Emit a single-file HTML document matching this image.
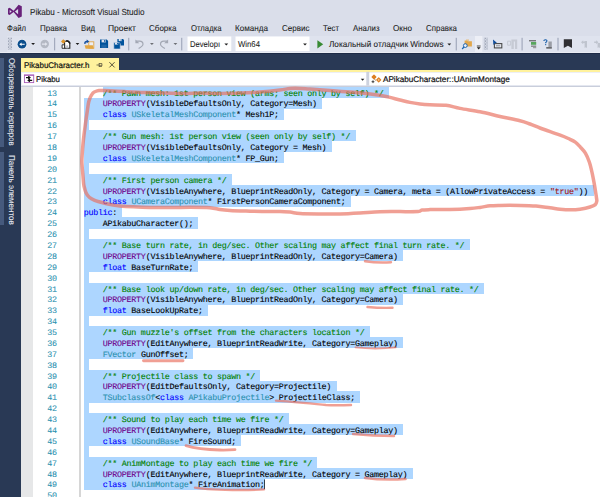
<!DOCTYPE html>
<html>
<head>
<meta charset="utf-8">
<title>Pikabu - Microsoft Visual Studio</title>
<style>
html,body{margin:0;padding:0;}
body{text-rendering:geometricPrecision;width:600px;height:497px;overflow:hidden;position:relative;background:#293955;font-family:"Liberation Sans",sans-serif;}
.abs{position:absolute;}
#title{left:0;top:0;width:600px;height:21px;background:#DADEEA;}
#menu{left:0;top:21px;width:600px;height:15px;background:#DADEEA;}
#tool{left:0;top:35px;width:600px;height:18.2px;background:#DADEEA;border-bottom:1.3px solid #E9ECF3;box-sizing:border-box;}
#tray{left:6.5px;top:35.7px;width:593.5px;height:16.2px;background:#DFE3EE;}
.ui{-webkit-text-stroke:0.08px;position:absolute;font-size:8.7px;line-height:10px;color:#1b1b1b;white-space:nowrap;}
#side{left:0;top:53.2px;width:21px;height:443px;background:#293955;}
.strip{position:absolute;left:0;width:4px;background:#465A7D;}
#tabrow{left:21px;top:53.2px;width:579px;height:17.1px;background:#293955;border-top:1px solid #1E2B47;box-sizing:border-box;}
#tab{left:21px;top:57.7px;width:98px;height:13.3px;background:#FFF29D;}
#tabline{left:21px;top:70.3px;width:579px;height:1.5px;background:#FFF29D;}
#nav{left:21px;top:71.8px;width:579px;height:13.9px;background:#FFFFFF;border-top:1px solid #EDEFF6;border-bottom:1.2px solid #E4E7F0;border-left:1px solid #EDEFF6;box-sizing:border-box;}
#navb{left:21px;top:85.6px;width:579px;height:1.2px;background:#C9CEDB;}
#code{left:21px;top:86.5px;width:579px;height:410.5px;background:#FFFFFF;}
#margin{left:21px;top:86.5px;width:11.5px;height:410.5px;background:#E6E7E8;}
#vline{left:78.9px;top:86.5px;width:1.7px;height:410.5px;background:#D6D6D6;}
.sel{position:absolute;background:#ADD6FF;}
.ln{-webkit-text-stroke:0.08px;position:absolute;left:29.3px;width:27.5px;text-align:right;color:#2B91AF;font-family:"Liberation Mono",monospace;font-size:8.4px;letter-spacing:-0.270px;line-height:10.885px;height:10.885px;white-space:pre;}
.cl{-webkit-text-stroke:0.1px;position:absolute;left:83.8px;color:#000;font-family:"Liberation Mono",monospace;font-size:8.4px;letter-spacing:-0.270px;line-height:10.885px;height:10.885px;white-space:pre;}
</style>
</head>
<body>
<div id="title" class="abs"></div>
<div id="menu" class="abs"></div>
<div id="tool" class="abs"></div>
<div id="tray" class="abs"></div>
<div class="ui" style="left:30.00px;top:7.04px;font-size:8.8px;line-height:normal;color:#1e1e1e;transform-origin:0 0;transform:scaleX(0.9228);">Pikabu - Microsoft Visual Studio</div>
<div class="ui" style="left:7.00px;top:22.71px;font-size:8.5px;line-height:normal;color:#1e1e1e;transform-origin:0 0;transform:scaleX(0.9092);">Файл</div>
<div class="ui" style="left:40.00px;top:22.71px;font-size:8.5px;line-height:normal;color:#1e1e1e;transform-origin:0 0;transform:scaleX(0.9403);">Правка</div>
<div class="ui" style="left:81.00px;top:22.71px;font-size:8.5px;line-height:normal;color:#1e1e1e;transform-origin:0 0;transform:scaleX(0.9104);">Вид</div>
<div class="ui" style="left:108.00px;top:22.71px;font-size:8.5px;line-height:normal;color:#1e1e1e;transform-origin:0 0;transform:scaleX(1.0000);">Проект</div>
<div class="ui" style="left:148.50px;top:22.71px;font-size:8.5px;line-height:normal;color:#1e1e1e;transform-origin:0 0;transform:scaleX(0.9452);">Сборка</div>
<div class="ui" style="left:190.50px;top:22.71px;font-size:8.5px;line-height:normal;color:#1e1e1e;transform-origin:0 0;transform:scaleX(0.9078);">Отладка</div>
<div class="ui" style="left:235.00px;top:22.71px;font-size:8.5px;line-height:normal;color:#1e1e1e;transform-origin:0 0;transform:scaleX(0.9529);">Команда</div>
<div class="ui" style="left:281.50px;top:22.71px;font-size:8.5px;line-height:normal;color:#1e1e1e;transform-origin:0 0;transform:scaleX(0.9448);">Сервис</div>
<div class="ui" style="left:322.50px;top:22.71px;font-size:8.5px;line-height:normal;color:#1e1e1e;transform-origin:0 0;transform:scaleX(0.9098);">Тест</div>
<div class="ui" style="left:352.50px;top:22.71px;font-size:8.5px;line-height:normal;color:#1e1e1e;transform-origin:0 0;transform:scaleX(0.9234);">Анализ</div>
<div class="ui" style="left:393.00px;top:22.71px;font-size:8.5px;line-height:normal;color:#1e1e1e;transform-origin:0 0;transform:scaleX(0.9619);">Окно</div>
<div class="ui" style="left:426.00px;top:22.71px;font-size:8.5px;line-height:normal;color:#1e1e1e;transform-origin:0 0;transform:scaleX(0.9297);">Справка</div>
<svg class="abs" style="left:0;top:34px" width="600" height="22" viewBox="0 34 600 22">
<defs>
<pattern id="grip" x="7.8" y="37.6" width="3" height="3" patternUnits="userSpaceOnUse">
<rect x="0" y="0" width="1.1" height="1.1" fill="#6f788e"/><rect x="1.5" y="1.5" width="1.1" height="1.1" fill="#6f788e"/>
</pattern>
</defs>
<!-- highlighted overflow button -->
<rect x="475" y="36" width="7.3" height="16" fill="#EDEFF6"/>
<!-- combos -->
<rect x="187.5" y="36.5" width="43.8" height="14.6" fill="#fff"/>
<rect x="235.5" y="36.5" width="74" height="14.6" fill="#fff"/>
<!-- grips -->
<rect x="7.8" y="37.6" width="4.2" height="12.2" fill="url(#grip)"/>
<rect x="483.8" y="37.6" width="4.2" height="12.2" fill="url(#grip)"/>
<!-- separators -->
<g fill="#a3aabd">
<rect x="54" y="37.8" width="1.2" height="12.6"/>
<rect x="128.1" y="37.8" width="1.2" height="12.6"/>
<rect x="181.1" y="37.8" width="1.2" height="12.6"/>
<rect x="455.7" y="37.8" width="1.2" height="12.6"/>
<rect x="521.5" y="37.8" width="1.2" height="12.6"/>
<rect x="557.4" y="37.8" width="1.2" height="12.6"/>
</g>
<!-- back -->
<circle cx="22" cy="44.2" r="5.1" fill="#EEF0F6"/><circle cx="22" cy="44.2" r="4.4" fill="#0A4D8C"/>
<path d="M19.3 44.2 L21.6 42.4 L21.6 43.65 L24.7 43.65 L24.7 44.75 L21.6 44.75 L21.6 46 Z" fill="#fff"/>
<!-- forward (disabled) -->
<circle cx="44.75" cy="44" r="4.2" fill="#B4B9C4"/>
<path d="M47.4 44.1 L45.1 42.3 L45.1 43.55 L42 43.55 L42 44.65 L45.1 44.65 L45.1 45.9 Z" fill="#E3E6EF"/>
<!-- dropdown arrows -->
<g fill="#1e1e1e">
<path d="M31.2 43 h3.8 l-1.9 2.1z"/>
<path d="M75.6 43 h3.8 l-1.9 2.1z"/>
<path d="M224.4 43.5 h3.8 l-1.9 2.1z"/>
<path d="M303.1 43.5 h3.8 l-1.9 2.1z"/>
<path d="M447.4 43.5 h3.8 l-1.9 2.1z"/>
<path d="M476.8 47.3 h3.8 l-1.9 2.2z"/>
<rect x="476.8" y="45.6" width="3.8" height="0.8"/>
</g>
<g fill="#6d6f75">
<path d="M150 43 h3.8 l-1.9 2.1z"/>
<path d="M173.5 43 h3.8 l-1.9 2.1z"/>
</g>
<!-- new project -->
<path d="M64.6 41.2 h3.4 l1.8 1.8 v5.3 h-5.2z" fill="#fff" stroke="#222" stroke-width="1.1"/>
<path d="M66.2 40.7 q3 -.1 3.7 3" fill="none" stroke="#1a1a1a" stroke-width="1.5"/>
<path d="M62.1 44.8 h2.5 v3.5 h-2.5z" fill="#fff" stroke="#222" stroke-width="0.9"/>
<rect x="66.2" y="45.4" width="2" height="2.9" fill="#b9bcc6"/>
<path d="M63.3 39.3 L65.6 41.5 L63.3 43.7 L61 41.5 Z" fill="#DF962A"/>
<!-- open folder -->
<rect x="88.8" y="41.8" width="5" height="6.4" fill="#ECEEF5" stroke="#E0A649" stroke-width="0.9"/>
<path d="M84.6 45.2 h8.2 l1 3.5 h-8.2z" fill="#E3A642"/>
<path d="M85 43.8 q-.4 -2.5 2.2 -2.4" stroke="#144F9E" stroke-width="1.5" fill="none"/><path d="M86.7 39.5 l2.6 1.9 -2.6 1.9z" fill="#144F9E"/>
<!-- save -->
<path d="M100 39.6 h6.8 l1.3 1.3 v7.1 h-8.1z" fill="#00539C"/>
<rect x="101.6" y="39.6" width="4.2" height="2.8" fill="#DFE3EE"/>
<rect x="104.2" y="40" width="1.1" height="1.9" fill="#00539C"/>
<rect x="101.4" y="44.6" width="5.2" height="3.4" fill="#1f66a8"/>
<!-- save all -->
<path d="M117.4 39 h5.6 l1 1 v5.6 h-6.6z" fill="#00539C"/>
<rect x="118.7" y="39" width="3.3" height="2.1" fill="#DFE3EE"/>
<rect x="120.7" y="39.3" width="0.9" height="1.5" fill="#00539C"/>
<path d="M113.8 42.6 h5.4 l1.1 1 v5.4 h-6.5z" fill="#00539C" stroke="#DDE1EC" stroke-width="0.6"/>
<rect x="115" y="42.6" width="3.2" height="2" fill="#DFE3EE"/>
<rect x="117" y="42.9" width="0.9" height="1.4" fill="#00539C"/>
<!-- undo / redo (disabled) -->
<path d="M136 41.2 h3.6 q3.4 .2 3.4 3 q-.2 2 -4.4 4.4" stroke="#A3A8B4" stroke-width="1.2" fill="none"/>
<path d="M135.4 39.4 v3.9 h3.9z" fill="#A3A8B4"/>
<path d="M167.5 41.2 h-3.6 q-3.4 .2 -3.4 3 q.2 2 4.4 4.4" stroke="#A3A8B4" stroke-width="1.2" fill="none"/>
<path d="M168.1 39.4 v3.9 h-3.9z" fill="#A3A8B4"/>
<!-- play -->
<path d="M317.4 40.2 v8.2 l5.8 -4.1z" fill="#388A34"/>
<!-- find in files -->
<path d="M464.6 40.4 h2.6 l.7 .8 h4 v5.4 h-7.3z" fill="#E2A74C"/>
<path d="M466 39.6 h3 v1 h-3z" fill="#E8B766"/>
<circle cx="465.3" cy="45.6" r="1.9" fill="#EDF0F7" stroke="#1B66B3" stroke-width="1"/>
<path d="M464 47 l-1.9 2" stroke="#1B66B3" stroke-width="1.2"/>
<!-- cursor + textbox -->
<rect x="494.4" y="43.6" width="7.4" height="4.3" fill="#E9ECF3" stroke="#4a4a4a" stroke-width="1.1"/><rect x="496" y="45.3" width="4.2" height="1" fill="#8d9099"/>
<path d="M493 39.4 l3.9 3.4 -2 .4 -1.5 1.7z" fill="#0E4C9C"/>
<!-- gray disabled icon -->
<path d="M507.6 41.2 h3 v4 h-3z" fill="none" stroke="#C3C7D1" stroke-width="0.9"/><path d="M511.4 39.4 h5.8 v9.6 h-2.2 v-7.6 h-1.2 v7.6 h-2.4z" fill="#C6CAD4"/>
<!-- list icon (green) -->
<rect x="529" y="40.3" width="7" height="1" fill="#4a4a4a"/>
<rect x="531" y="42" width="5.2" height="2.8" fill="#58A55C"/>
<rect x="531" y="45.6" width="5.2" height="1.1" fill="#6d6d6d"/>
<rect x="533" y="47.2" width="3.2" height="1" fill="#8a8a8a"/>
<!-- ? icon -->
<path d="M543.8 41 q.2 -1.3 1.7 -1.2 q1.5 .1 1.4 1.3 q0 .8 -1.2 1.4 v.7" stroke="#1B5FAA" stroke-width="1.1" fill="none"/>
<rect x="545.1" y="44.1" width="1.1" height="1.1" fill="#1B5FAA"/>
<path d="M548.4 41.4 h3.4 v7 h-5.6 v-1.4 h2.2z" fill="#9a9da5"/>
<rect x="546.4" y="47.4" width="5.4" height="1" fill="#4a4a4a"/>
<!-- bookmark -->
<path d="M563.8 39.3 h8.2 v8.8 l-4.1 -2.4 -4.1 2.4z" fill="#2f2f33"/>
<!-- gray bookmark nav icons -->
<path d="M581 42.2 l2.2 -2 v1.3 h2 v1.4 h-2 v1.3z" fill="#BFC4CE"/>
<path d="M584.6 41 h2.4 v7 l-1.2 -.8 -1.2 .8z" fill="#BFC4CE"/>
<path d="M598.4 42.2 l-2.2 -2 v1.3 h-2 v1.4 h2 v1.3z" fill="#BFC4CE"/>
<path d="M597.6 43 h2.4 v5 l-1.2 -.8 -1.2 .8z" fill="#BFC4CE"/>
</svg>
<div class="ui" style="left:190.00px;top:39.31px;font-size:8.5px;line-height:normal;color:#1e1e1e;transform-origin:0 0;transform:scaleX(0.8942);">Developı</div><div class="ui" style="left:238.30px;top:39.31px;font-size:8.5px;line-height:normal;color:#1e1e1e;transform-origin:0 0;transform:scaleX(0.9131);">Win64</div><div class="ui" style="left:328.80px;top:39.11px;font-size:8.5px;line-height:normal;color:#1e1e1e;transform-origin:0 0;transform:scaleX(0.9632);">Локальный отладчик Windows</div>
<div id="side" class="abs"></div>
<div id="tabrow" class="abs"></div>
<div id="tab" class="abs"></div>
<div id="tabline" class="abs"></div>
<div id="nav" class="abs"></div>
<div id="navb" class="abs"></div>
<div id="code" class="abs"></div>
<div id="margin" class="abs"></div>
<div id="vline" class="abs"></div>
<div class="sel" style="left:102.88px;top:86.70px;width:286.13px;height:11.19px"></div>
<div class="sel" style="left:83.80px;top:97.59px;width:238.43px;height:11.19px"></div>
<div class="sel" style="left:83.80px;top:108.47px;width:200.27px;height:11.19px"></div>
<div class="sel" style="left:83.80px;top:119.36px;width:5.00px;height:11.19px"></div>
<div class="sel" style="left:83.80px;top:130.24px;width:271.82px;height:11.19px"></div>
<div class="sel" style="left:83.80px;top:141.12px;width:247.97px;height:11.19px"></div>
<div class="sel" style="left:83.80px;top:152.01px;width:200.27px;height:11.19px"></div>
<div class="sel" style="left:83.80px;top:162.89px;width:5.00px;height:11.19px"></div>
<div class="sel" style="left:83.80px;top:173.78px;width:147.80px;height:11.19px"></div>
<div class="sel" style="left:83.80px;top:184.67px;width:510.32px;height:11.19px"></div>
<div class="sel" style="left:83.80px;top:195.55px;width:267.05px;height:11.19px"></div>
<div class="sel" style="left:83.80px;top:206.44px;width:38.09px;height:11.19px"></div>
<div class="sel" style="left:83.80px;top:217.32px;width:114.41px;height:11.19px"></div>
<div class="sel" style="left:83.80px;top:228.20px;width:5.00px;height:11.19px"></div>
<div class="sel" style="left:83.80px;top:239.09px;width:386.30px;height:11.19px"></div>
<div class="sel" style="left:83.80px;top:249.98px;width:319.52px;height:11.19px"></div>
<div class="sel" style="left:83.80px;top:260.86px;width:114.41px;height:11.19px"></div>
<div class="sel" style="left:83.80px;top:271.75px;width:5.00px;height:11.19px"></div>
<div class="sel" style="left:83.80px;top:282.63px;width:400.61px;height:11.19px"></div>
<div class="sel" style="left:83.80px;top:293.51px;width:319.52px;height:11.19px"></div>
<div class="sel" style="left:83.80px;top:304.40px;width:123.95px;height:11.19px"></div>
<div class="sel" style="left:83.80px;top:315.29px;width:5.00px;height:11.19px"></div>
<div class="sel" style="left:83.80px;top:326.17px;width:286.13px;height:11.19px"></div>
<div class="sel" style="left:83.80px;top:337.06px;width:319.52px;height:11.19px"></div>
<div class="sel" style="left:83.80px;top:347.94px;width:109.64px;height:11.19px"></div>
<div class="sel" style="left:83.80px;top:358.82px;width:5.00px;height:11.19px"></div>
<div class="sel" style="left:83.80px;top:369.71px;width:176.42px;height:11.19px"></div>
<div class="sel" style="left:83.80px;top:380.59px;width:252.74px;height:11.19px"></div>
<div class="sel" style="left:83.80px;top:391.48px;width:276.59px;height:11.19px"></div>
<div class="sel" style="left:83.80px;top:402.37px;width:5.00px;height:11.19px"></div>
<div class="sel" style="left:83.80px;top:413.25px;width:205.04px;height:11.19px"></div>
<div class="sel" style="left:83.80px;top:424.13px;width:319.52px;height:11.19px"></div>
<div class="sel" style="left:83.80px;top:435.02px;width:157.34px;height:11.19px"></div>
<div class="sel" style="left:83.80px;top:445.90px;width:5.00px;height:11.19px"></div>
<div class="sel" style="left:83.80px;top:456.79px;width:233.66px;height:11.19px"></div>
<div class="sel" style="left:83.80px;top:467.67px;width:329.06px;height:11.19px"></div>
<div class="sel" style="left:83.80px;top:478.56px;width:181.26px;height:11.19px"></div>
<div class="ln" style="top:88.60px">13</div>
<div class="ln" style="top:99.49px">14</div>
<div class="ln" style="top:110.37px">15</div>
<div class="ln" style="top:121.26px">16</div>
<div class="ln" style="top:132.14px">17</div>
<div class="ln" style="top:143.03px">18</div>
<div class="ln" style="top:153.91px">19</div>
<div class="ln" style="top:164.79px">20</div>
<div class="ln" style="top:175.68px">21</div>
<div class="ln" style="top:186.57px">22</div>
<div class="ln" style="top:197.45px">23</div>
<div class="ln" style="top:208.34px">24</div>
<div class="ln" style="top:219.22px">25</div>
<div class="ln" style="top:230.10px">26</div>
<div class="ln" style="top:240.99px">27</div>
<div class="ln" style="top:251.88px">28</div>
<div class="ln" style="top:262.76px">29</div>
<div class="ln" style="top:273.64px">30</div>
<div class="ln" style="top:284.53px">31</div>
<div class="ln" style="top:295.41px">32</div>
<div class="ln" style="top:306.30px">33</div>
<div class="ln" style="top:317.19px">34</div>
<div class="ln" style="top:328.07px">35</div>
<div class="ln" style="top:338.95px">36</div>
<div class="ln" style="top:349.84px">37</div>
<div class="ln" style="top:360.72px">38</div>
<div class="ln" style="top:371.61px">39</div>
<div class="ln" style="top:382.49px">40</div>
<div class="ln" style="top:393.38px">41</div>
<div class="ln" style="top:404.26px">42</div>
<div class="ln" style="top:415.15px">43</div>
<div class="ln" style="top:426.03px">44</div>
<div class="ln" style="top:436.92px">45</div>
<div class="ln" style="top:447.80px">46</div>
<div class="ln" style="top:458.69px">47</div>
<div class="ln" style="top:469.57px">48</div>
<div class="ln" style="top:480.46px">49</div>
<div class="ln" style="top:491.34px">50</div>
<div class="cl" style="top:88.60px">    <span style="color:#008000">/** Pawn mesh: 1st person view (arms; seen only by self) */</span></div>
<div class="cl" style="top:99.49px">    <span style="color:#6F008A">UPROPERTY</span>(VisibleDefaultsOnly, Category=Mesh)</div>
<div class="cl" style="top:110.37px">    <span style="color:#0000FF">class</span> <span style="color:#2B91AF">USkeletalMeshComponent</span>* Mesh1P;</div>
<div class="cl" style="top:132.14px">    <span style="color:#008000">/** Gun mesh: 1st person view (seen only by self) */</span></div>
<div class="cl" style="top:143.03px">    <span style="color:#6F008A">UPROPERTY</span>(VisibleDefaultsOnly, Category = Mesh)</div>
<div class="cl" style="top:153.91px">    <span style="color:#0000FF">class</span> <span style="color:#2B91AF">USkeletalMeshComponent</span>* FP_Gun;</div>
<div class="cl" style="top:175.68px">    <span style="color:#008000">/** First person camera */</span></div>
<div class="cl" style="top:186.57px">    <span style="color:#6F008A">UPROPERTY</span>(VisibleAnywhere, BlueprintReadOnly, Category = Camera, meta = (AllowPrivateAccess = <span style="color:#A31515">&quot;true&quot;</span>))</div>
<div class="cl" style="top:197.45px">    <span style="color:#0000FF">class</span> <span style="color:#2B91AF">UCameraComponent</span>* FirstPersonCameraComponent;</div>
<div class="cl" style="top:208.34px"><span style="color:#0000FF">public</span>:</div>
<div class="cl" style="top:219.22px">    APikabuCharacter();</div>
<div class="cl" style="top:240.99px">    <span style="color:#008000">/** Base turn rate, in deg/sec. Other scaling may affect final turn rate. */</span></div>
<div class="cl" style="top:251.88px">    <span style="color:#6F008A">UPROPERTY</span>(VisibleAnywhere, BlueprintReadOnly, Category=Camera)</div>
<div class="cl" style="top:262.76px">    <span style="color:#0000FF">float</span> BaseTurnRate;</div>
<div class="cl" style="top:284.53px">    <span style="color:#008000">/** Base look up/down rate, in deg/sec. Other scaling may affect final rate. */</span></div>
<div class="cl" style="top:295.41px">    <span style="color:#6F008A">UPROPERTY</span>(VisibleAnywhere, BlueprintReadOnly, Category=Camera)</div>
<div class="cl" style="top:306.30px">    <span style="color:#0000FF">float</span> BaseLookUpRate;</div>
<div class="cl" style="top:328.07px">    <span style="color:#008000">/** Gun muzzle&#x27;s offset from the characters location */</span></div>
<div class="cl" style="top:338.95px">    <span style="color:#6F008A">UPROPERTY</span>(EditAnywhere, BlueprintReadWrite, Category=Gameplay)</div>
<div class="cl" style="top:349.84px">    <span style="color:#2B91AF">FVector</span> GunOffset;</div>
<div class="cl" style="top:371.61px">    <span style="color:#008000">/** Projectile class to spawn */</span></div>
<div class="cl" style="top:382.49px">    <span style="color:#6F008A">UPROPERTY</span>(EditDefaultsOnly, Category=Projectile)</div>
<div class="cl" style="top:393.38px">    <span style="color:#2B91AF">TSubclassOf</span>&lt;<span style="color:#0000FF">class</span> <span style="color:#2B91AF">APikabuProjectile</span>&gt; ProjectileClass;</div>
<div class="cl" style="top:415.15px">    <span style="color:#008000">/** Sound to play each time we fire */</span></div>
<div class="cl" style="top:426.03px">    <span style="color:#6F008A">UPROPERTY</span>(EditAnywhere, BlueprintReadWrite, Category=Gameplay)</div>
<div class="cl" style="top:436.92px">    <span style="color:#0000FF">class</span> <span style="color:#2B91AF">USoundBase</span>* FireSound;</div>
<div class="cl" style="top:458.69px">    <span style="color:#008000">/** AnimMontage to play each time we fire */</span></div>
<div class="cl" style="top:469.57px">    <span style="color:#6F008A">UPROPERTY</span>(EditAnywhere, BlueprintReadWrite, Category = Gameplay)</div>
<div class="cl" style="top:480.46px">    <span style="color:#0000FF">class</span> <span style="color:#2B91AF">UAnimMontage</span>* FireAnimation;</div>
<div class="strip" style="top:57.7px;height:89.8px"></div><div class="strip" style="top:152px;height:73px"></div><div class="ui" style="left:17.2px;top:58.20px;font-size:8.4px;line-height:normal;color:#E6EAF2;transform-origin:0 0;transform:rotate(90deg) scaleX(0.9350);">Обозреватель серверов</div><div class="ui" style="left:17.2px;top:154.50px;font-size:8.4px;line-height:normal;color:#E6EAF2;transform-origin:0 0;transform:rotate(90deg) scaleX(0.9589);">Панель элементов</div>
<svg class="abs" style="left:0;top:0" width="40" height="24" viewBox="0 0 40 24">
<path fill="#68217A" fill-rule="evenodd" d="M8 8.6 L9.7 7.7 L13.6 10.7 L18.6 4.7 L21.8 6.2 L21.8 16.5 L18.6 18 L13.6 12.1 L9.7 15.1 L8 14.2 Z M9.7 9.9 L9.7 13.1 L11.7 11.5 Z M18.1 8.9 L18.1 14.2 L14.9 11.55 Z"/>
</svg>
<svg class="abs" style="left:21px;top:56px" width="579" height="32" viewBox="21 56 579 32">
<!-- pin -->
<g stroke="#4a4636" stroke-width="0.75" fill="none">
<path d="M96.5 65 h2.6 M99.2 63 v4 M99.2 63.6 h2.7 v2.3 h-2.7 M99.2 66.3 h2.7"/>
</g>
<!-- close -->
<path d="M109.4 62.2 l5.2 5.2 M114.6 62.2 l-5.2 5.2" stroke="#3a3628" stroke-width="0.85" fill="none"/>
<!-- nav: left combo icon -->
<rect x="24.4" y="75.1" width="9.3" height="7.5" fill="#fff" stroke="#A85DB8" stroke-width="0.9"/>
<rect x="24" y="74.6" width="10.1" height="1.1" fill="#A85DB8"/>
<path d="M26 77.6 h3.6 M28.3 76.2 l1.7 1.4 -1.7 1.4 M32.2 80.4 h-3.6 M29.9 79 l-1.7 1.4 1.7 1.4" stroke="#111" stroke-width="1.15" fill="none"/>
<!-- combo arrows / borders -->
<path d="M360.8 78.7 h3.6 l-1.8 2z" fill="#1e1e1e"/>
<rect x="366.3" y="71.8" width="2.9" height="13.9" fill="#CDD2DE"/>
<!-- class member icon -->
<rect x="372.1" y="75.1" width="3.8" height="3.8" rx="0.6" fill="#DD7F22" transform="rotate(45 374 77)"/>
<rect x="376.7" y="77.9" width="4" height="4" rx="0.6" fill="#DD7F22" transform="rotate(45 378.7 79.9)"/>
<rect x="377.9" y="79.1" width="1.6" height="1.6" fill="#F3C79A" transform="rotate(45 378.7 79.9)"/>
<path d="M373 80.3 v2.8 M371.6 81.7 h2.8" stroke="#333" stroke-width="0.9" fill="none"/>
<path d="M374.4 79.4 l1.6 1" stroke="#8a5a2a" stroke-width="0.7" fill="none"/>
</svg><div class="ui" style="left:23.80px;top:60.58px;font-size:8.2px;line-height:normal;color:#111;transform-origin:0 0;transform:scaleX(0.9724);-webkit-text-stroke:0.2px;">PikabuCharacter.h</div><div class="ui" style="left:36.00px;top:75.48px;font-size:8.2px;line-height:normal;color:#111;transform-origin:0 0;transform:scaleX(0.9572);-webkit-text-stroke:0.2px;">Pikabu</div><div class="ui" style="left:382.60px;top:75.48px;font-size:8.2px;line-height:normal;color:#111;transform-origin:0 0;transform:scaleX(0.9951);-webkit-text-stroke:0.2px;">APikabuCharacter::UAnimMontage</div><svg class="abs" style="left:0;top:0" width="600" height="497" viewBox="0 0 600 497">
<g fill="none" stroke="#E86D5D" stroke-opacity="0.66" stroke-linecap="round" stroke-linejoin="round">
<path stroke-width="3.5" d="M105.0 90.6 C104.0 90.6 100.6 90.4 99.0 90.6 C97.4 90.8 96.5 91.1 95.5 91.5 C94.5 91.9 93.7 92.3 93.0 93.0 C92.3 93.7 91.8 94.7 91.3 95.5 C90.8 96.3 90.4 96.9 90.0 98.0 C89.6 99.1 89.0 100.7 88.7 102.0 C88.4 103.3 88.2 104.5 88.0 106.0 C87.8 107.5 87.7 108.3 87.3 111.0 C86.9 113.7 86.2 118.0 85.7 122.0 C85.2 126.0 84.5 130.6 84.0 134.8 C83.5 139.1 83.0 143.3 82.7 147.5 C82.4 151.7 82.0 156.8 81.9 160.1 C81.8 163.3 82.1 164.9 82.2 167.0 C82.3 169.1 82.5 170.6 82.7 172.8 C82.9 175.0 83.1 177.8 83.3 180.0 C83.5 182.2 83.5 183.9 84.0 186.0 C84.5 188.1 85.1 190.8 86.0 192.7 C86.9 194.6 87.8 196.0 89.3 197.3 C90.8 198.6 92.9 199.6 94.7 200.4 C96.5 201.2 98.0 201.4 100.0 202.0 C102.0 202.6 104.5 203.2 106.7 203.7 C108.9 204.2 111.1 204.7 113.3 205.1 C115.5 205.5 116.7 205.7 120.0 206.0 C123.3 206.3 128.3 206.6 133.3 206.8 C138.3 207.1 143.9 207.4 150.0 207.5 C156.1 207.6 163.3 207.6 170.0 207.6 C176.7 207.6 183.3 207.3 190.0 207.3 C196.7 207.3 205.0 207.3 210.0 207.7 C215.0 208.1 216.7 209.0 220.0 209.5 C223.3 210.0 225.0 210.2 230.0 210.5 C235.0 210.8 243.3 211.0 250.0 211.2 C256.7 211.4 265.0 211.5 270.0 211.5 C275.0 211.5 276.7 211.3 280.0 211.4 C283.3 211.5 286.7 211.8 290.0 212.1 C293.3 212.4 295.0 213.2 300.0 213.5 C305.0 213.8 313.3 213.9 320.0 214.0 C326.7 214.1 333.3 214.2 340.0 214.0 C346.7 213.8 353.3 213.4 360.0 213.0 C366.7 212.6 373.3 211.9 380.0 211.7 C386.7 211.5 393.7 211.6 400.0 211.6 C406.3 211.6 414.3 211.8 418.0 211.5 C421.7 211.2 420.0 210.3 422.0 210.0 C424.0 209.7 425.3 209.7 430.0 209.6 C434.7 209.5 443.3 209.7 450.0 209.5 C456.7 209.3 465.0 208.8 470.0 208.4 C475.0 208.1 476.7 207.8 480.0 207.4 C483.3 207.0 486.7 206.1 490.0 205.8 C493.3 205.5 495.0 205.5 500.0 205.4 C505.0 205.3 514.0 205.3 520.0 205.4 C526.0 205.5 531.0 205.6 536.0 206.0 C541.0 206.4 546.0 207.3 550.0 207.8 C554.0 208.3 556.7 208.9 560.0 209.2 C563.3 209.5 566.7 209.8 570.0 209.8 C573.3 209.8 576.7 209.7 580.0 209.2 C583.3 208.7 587.5 207.8 590.0 207.0 C592.5 206.2 594.2 205.6 595.3 204.6 C596.4 203.6 596.6 202.1 596.8 201.0 C597.0 199.9 596.6 199.1 596.5 198.0 C596.4 196.9 596.4 197.0 596.0 194.4 C595.6 191.8 594.7 186.1 594.0 182.4 C593.3 178.7 592.8 175.7 592.0 172.3 C591.2 169.0 590.5 165.5 589.4 162.3 C588.3 159.1 586.9 155.7 585.4 153.2 C583.9 150.7 582.1 149.0 580.4 147.2 C578.7 145.3 577.3 143.5 575.3 142.1 C573.3 140.7 570.8 139.7 568.3 138.5 C565.8 137.3 563.2 136.2 560.2 135.1 C557.2 134.0 553.6 132.9 550.2 131.7 C546.8 130.5 543.4 129.3 540.0 128.0 C536.6 126.7 533.3 125.2 530.0 124.0 C526.7 122.8 525.0 122.0 520.0 120.8 C515.0 119.5 506.7 118.0 500.0 116.5 C493.3 115.0 486.7 113.1 480.0 111.8 C473.3 110.5 465.7 109.5 460.0 108.4 C454.3 107.3 451.0 105.9 446.0 105.3 C441.0 104.7 434.3 105.0 430.0 104.8 C425.7 104.6 423.3 104.4 420.0 104.0 C416.7 103.6 413.3 103.1 410.0 102.4 C406.7 101.7 403.3 100.8 400.0 100.0 C396.7 99.2 393.3 98.2 390.0 97.4 C386.7 96.6 383.3 96.0 380.0 95.4 C376.7 94.8 375.0 94.6 370.0 94.0 C365.0 93.4 356.7 92.6 350.0 92.0 C343.3 91.4 336.7 90.9 330.0 90.4 C323.3 89.9 315.0 89.3 310.0 89.0 C305.0 88.7 303.3 88.5 300.0 88.4 C296.7 88.3 293.3 88.2 290.0 88.5 C286.7 88.8 285.0 89.4 280.0 90.0 C275.0 90.6 266.7 91.5 260.0 92.0 C253.3 92.5 246.7 92.8 240.0 93.0 C233.3 93.2 226.7 93.4 220.0 93.4 C213.3 93.4 205.8 93.0 200.0 93.0 C194.2 93.0 190.8 93.4 185.0 93.4 C179.2 93.4 171.7 93.2 165.0 93.0 C158.3 92.8 151.7 92.6 145.0 92.4 C138.3 92.2 131.7 91.9 125.0 91.6 C118.3 91.3 108.3 90.8 105.0 90.6"/>
<path stroke-width="2.4" d="M365 261.2 Q378 263.2 391 262.2"/>
<path stroke-width="2.4" d="M367.5 307 Q380 308.2 392.5 307.8"/>
<path stroke-width="2.9" d="M143.5 360.8 L183 360.8"/>
<path stroke-width="1.9" d="M355.5 347.4 Q375 349.6 395.8 347.4"/>
<path stroke-width="2.4" d="M276 400.6 C290 401.5 310 403.5 326 405 C335 405.5 345 405.2 351 405"/>
<path stroke-width="2.4" d="M353 434 C362 434.8 375 435.8 394 436"/>
<path stroke-width="2.4" d="M365 478 C375 479.3 390 480 405.6 479"/>
<path stroke-width="2.8" d="M186 445.6 C192 447.4 205 449.5 220 450 C226 450.1 231 449.9 235 449.6"/>
<path stroke-width="2.4" d="M195 487.6 C203 489 225 490 240 490 C250 490 258 489.8 264 489.4"/>
</g>
<rect x="264.1" y="479.5" width="0.7" height="9.4" fill="#000"/>
</svg>

</body>
</html>
